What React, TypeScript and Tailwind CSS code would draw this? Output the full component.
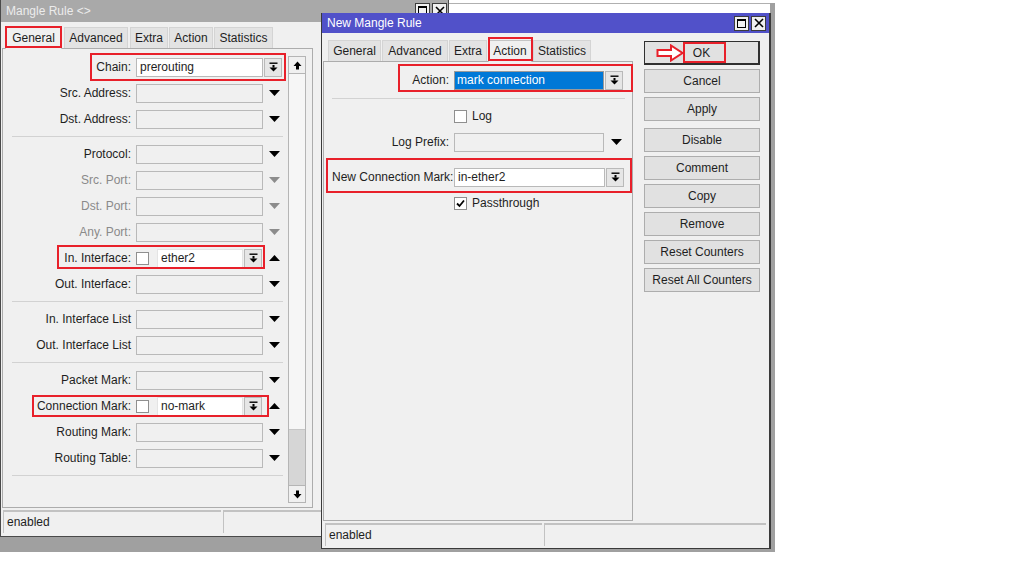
import React from "react";

const BarDown = () => (
  <svg width="9" height="10" viewBox="0 0 9 10">
    <rect x="0.5" y="0.5" width="8" height="1.4" fill="#000" />
    <rect x="3.5" y="3" width="2" height="2.6" fill="#000" />
    <path d="M0.5 5.5 H8.5 L4.5 9.5 Z" fill="#000" />
  </svg>
);

const TriDown = ({ gray }: { gray?: boolean }) => (
  <svg width="11" height="6" viewBox="0 0 11 6">
    <path d="M0 0 H11 L5.5 6 Z" fill={gray ? "#8c8c8c" : "#000"} />
  </svg>
);

const TriUp = () => (
  <svg width="11" height="6" viewBox="0 0 11 6">
    <path d="M0 6 H11 L5.5 0 Z" fill="#000" />
  </svg>
);

const ScrollUp = () => (
  <svg width="9" height="9" viewBox="0 0 9 9">
    <path d="M4.5 0.5 L8.5 5 H6 V8.5 H3 V5 H0.5 Z" fill="#000" />
  </svg>
);

const ScrollDown = () => (
  <svg width="9" height="9" viewBox="0 0 9 9">
    <path d="M4.5 8.5 L8.5 4 H6 V0.5 H3 V4 H0.5 Z" fill="#000" />
  </svg>
);

const Check = () => (
  <svg width="11" height="11" viewBox="0 0 11 11">
    <path d="M2 5.5 L4.5 8 L9 2.5" stroke="#000" strokeWidth="1.8" fill="none" />
  </svg>
);

const WinButtons = () => (
  <div className="flex gap-[2px]">
    <div className="w-[15px] h-[15px] bg-[#f0f0f0] border border-[#3c3c3c] flex items-center justify-center">
      <div className="w-[9px] h-[9px] border border-[#000] border-t-2" />
    </div>
    <div className="w-[15px] h-[15px] bg-[#f0f0f0] border border-[#3c3c3c] flex items-center justify-center">
      <svg width="10" height="10" viewBox="0 0 10 10">
        <path d="M1 1 L9 9 M9 1 L1 9" stroke="#000" strokeWidth="1.6" />
      </svg>
    </div>
  </div>
);

const DropBtn = () => (
  <div className="w-[18px] h-[19px] bg-[#e6e6e6] border border-[#b9b9b9] flex items-center justify-center shrink-0">
    <BarDown />
  </div>
);

const CheckBox = ({ checked }: { checked?: boolean }) => (
  <div className="w-[13px] h-[13px] bg-white border border-[#8f8f8f] flex items-center justify-center shrink-0">
    {checked ? <Check /> : null}
  </div>
);

type Kind = "select" | "gray" | "chain" | "check";
type RowDef = { label: string; kind: Kind; value?: string };

const LRow = ({ r }: { r: RowDef }) => (
  <div className="h-[26px] flex items-center">
    <div
      className={
        "w-[119px] shrink-0 text-right whitespace-nowrap " +
        (r.kind === "gray" ? "text-[#8a8a8a]" : "text-[#1e1e1e]")
      }
    >
      {r.label}
    </div>
    <div className="ml-[5px] flex items-center shrink-0">
      {r.kind === "chain" ? (
        <>
          <div className="w-[127px] h-[19px] bg-white border border-[#b9b9b9] pl-[3px] leading-[17px] text-[#1e1e1e]">
            {r.value}
          </div>
          <div className="ml-[1px]">
            <DropBtn />
          </div>
        </>
      ) : r.kind === "check" ? (
        <>
          <CheckBox />
          <div className="ml-[8px] w-[86px] h-[19px] bg-white border border-[#e4e4e4] pl-[3px] leading-[17px] text-[#1e1e1e]">
            {r.value}
          </div>
          <div className="ml-[1px]">
            <DropBtn />
          </div>
          <div className="w-[24px] flex justify-center">
            <TriUp />
          </div>
        </>
      ) : (
        <>
          <div className="w-[127px] h-[19px] bg-[#f0f0f0] border border-[#b9b9b9]" />
          <div className="w-[22px] flex justify-center">
            <TriDown gray={r.kind === "gray"} />
          </div>
        </>
      )}
    </div>
  </div>
);

const leftGroups: RowDef[][] = [
  [
    { label: "Chain:", kind: "chain", value: "prerouting" },
    { label: "Src. Address:", kind: "select" },
    { label: "Dst. Address:", kind: "select" },
  ],
  [
    { label: "Protocol:", kind: "select" },
    { label: "Src. Port:", kind: "gray" },
    { label: "Dst. Port:", kind: "gray" },
    { label: "Any. Port:", kind: "gray" },
    { label: "In. Interface:", kind: "check", value: "ether2" },
    { label: "Out. Interface:", kind: "select" },
  ],
  [
    { label: "In. Interface List", kind: "select" },
    { label: "Out. Interface List", kind: "select" },
  ],
  [
    { label: "Packet Mark:", kind: "select" },
    { label: "Connection Mark:", kind: "check", value: "no-mark" },
    { label: "Routing Mark:", kind: "select" },
    { label: "Routing Table:", kind: "select" },
  ],
];

const Tab = ({ label, w, ml, sel }: { label: string; w: string; ml: string; sel?: boolean }) => (
  <div
    className={
      w +
      " " +
      ml +
      " shrink-0 text-center text-[#1e1e1e] border border-b-0 " +
      (sel
        ? "h-[22px] leading-[21px] bg-[#f0f0f0] border-[#c4c4c4] relative z-10 -mb-[1px]"
        : "h-[21px] leading-[21px] bg-[#e3e3e3] border-[#d4d4d4]")
    }
  >
    {label}
  </div>
);

const StatusBar = ({ w1, w2 }: { w1: string; w2: string }) => (
  <div className="mt-[2px] h-[23px] flex shrink-0">
    <div className={w1 + " h-full border-t-2 border-l border-[#c2c2c2] pl-[3px] leading-[21px] text-[#1e1e1e]"}>
      enabled
    </div>
    <div className={w2 + " ml-[2px] h-full border-t-2 border-l border-[#c2c2c2]"} />
  </div>
);

const LeftWindow = () => (
  <div className="absolute left-0 top-0 w-[449px] h-[537px] flex flex-col border-l border-r border-b border-[#4a4a4a] bg-[#f0f0f0]">
    <div className="h-[22px] bg-[#a9a9a9] flex items-start justify-between pl-[5px] pr-[1px] shrink-0">
      <span className="text-[#ececec] leading-[22px]">Mangle Rule &lt;&gt;</span>
      <div className="mt-[3px]">
        <WinButtons />
      </div>
    </div>
    <div className="pl-[1px] flex flex-col">
      <div className="mt-[5px] h-[21px] flex items-end">
        <Tab label="General" w="w-[57px]" ml="ml-[3px]" sel />
        <Tab label="Advanced" w="w-[64px]" ml="ml-[2px]" />
        <Tab label="Extra" w="w-[38px]" ml="ml-[2px]" />
        <Tab label="Action" w="w-[44px]" ml="ml-[1px]" />
        <Tab label="Statistics" w="w-[59px]" ml="ml-[1px]" />
      </div>
      <div className="h-[460px] w-[311px] border border-[#acacac] bg-[#f0f0f0] flex">
        <div className="w-[285px] shrink-0 pl-[9px] pt-[5px] flex flex-col">
          {leftGroups.map((g, gi) => (
            <div key={gi} className="w-[271px] border-b border-[#d2d2d2] pb-[4px] mb-[4px]">
              {g.map((r) => (
                <LRow key={r.label} r={r} />
              ))}
            </div>
          ))}
        </div>
        <div className="mt-[7px] w-[18px] shrink-0 h-[447px] border border-[#b5b5b5] flex flex-col">
          <div className="h-[17px] border-b border-[#b5b5b5] bg-[#f0f0f0] flex items-center justify-center">
            <ScrollUp />
          </div>
          <div className="flex-1 bg-[#f6f6f6] flex flex-col justify-end">
            <div className="h-[56px] bg-[#d6d6d6] border-t border-[#c6c6c6]" />
          </div>
          <div className="h-[17px] border-t border-[#b5b5b5] bg-[#f0f0f0] flex items-center justify-center">
            <ScrollDown />
          </div>
        </div>
      </div>
      <div className="pl-[1px]">
        <StatusBar w1="w-[218px]" w2="w-[224px]" />
      </div>
    </div>
  </div>
);

const RRow = ({ label, children }: { label: string; children: React.ReactNode }) => (
  <div className="h-[26px] flex items-center">
    <div className="w-[117px] shrink-0 text-right whitespace-nowrap text-[#1e1e1e]">{label}</div>
    <div className="ml-[5px] flex items-center shrink-0">{children}</div>
  </div>
);

const Btn = ({ label, def, mt }: { label: string; def?: boolean; mt: string }) => (
  <div
    className={
      mt +
      " h-[24px] w-[116px] flex items-center justify-center text-[#1e1e1e] bg-[#e1e1e1] " +
      (def ? "border border-[#303030] border-r-2 border-b-2" : "border border-[#adadad]")
    }
  >
    {label}
  </div>
);

const RightWindow = () => (
  <div className="absolute left-[321px] top-[13px] w-[450px] h-[536px] flex flex-col border-l border-r-2 border-b border-[#3a3a3a] bg-[#f0f0f0]">
    <div className="h-[20px] bg-[#5151c9] flex items-center justify-between pl-[5px] pr-[3px] shrink-0">
      <span className="text-white leading-[20px]">New Mangle Rule</span>
      <WinButtons />
    </div>
    <div className="flex">
      <div className="ml-[1px] w-[310px] shrink-0 flex flex-col">
        <div className="mt-[7px] h-[21px] flex items-end">
          <Tab label="General" w="w-[53px]" ml="ml-[5px]" />
          <Tab label="Advanced" w="w-[66px]" ml="ml-[1px]" />
          <Tab label="Extra" w="w-[38px]" ml="ml-[1px]" />
          <Tab label="Action" w="w-[44px]" ml="ml-[1px]" sel />
          <Tab label="Statistics" w="w-[58px]" ml="ml-[1px]" />
        </div>
        <div className="h-[460px] w-[310px] border border-[#acacac] bg-[#f0f0f0] flex flex-col pl-[8px] pt-[5px]">
          <div className="w-[293px] border-b border-[#d2d2d2] pb-[5px] mb-[4px]">
            <RRow label="Action:">
              <div className="w-[150px] h-[19px] bg-[#0078d7] border border-[#9a9a9a] pl-[2px] leading-[17px] text-white">
                mark connection
              </div>
              <div className="ml-[1px]">
                <DropBtn />
              </div>
            </RRow>
          </div>
          <RRow label="">
            <CheckBox />
            <span className="ml-[5px] text-[#1e1e1e]">Log</span>
          </RRow>
          <RRow label="Log Prefix:">
            <div className="w-[150px] h-[19px] bg-[#f0f0f0] border border-[#b9b9b9]" />
            <div className="w-[24px] flex justify-center">
              <TriDown />
            </div>
          </RRow>
          <div className="h-[9px]" />
          <RRow label="New Connection Mark:">
            <div className="w-[151px] h-[19px] bg-white border border-[#b9b9b9] pl-[3px] leading-[17px] text-[#1e1e1e]">
              in-ether2
            </div>
            <div className="ml-[1px]">
              <DropBtn />
            </div>
          </RRow>
          <RRow label="">
            <CheckBox checked />
            <span className="ml-[5px] text-[#1e1e1e]">Passthrough</span>
          </RRow>
        </div>
      </div>
      <div className="ml-[11px] flex flex-col">
        <Btn label="OK" def mt="mt-[8px]" />
        <Btn label="Cancel" mt="mt-[4px]" />
        <Btn label="Apply" mt="mt-[4px]" />
        <Btn label="Disable" mt="mt-[7px]" />
        <Btn label="Comment" mt="mt-[4px]" />
        <Btn label="Copy" mt="mt-[4px]" />
        <Btn label="Remove" mt="mt-[4px]" />
        <Btn label="Reset Counters" mt="mt-[4px]" />
        <Btn label="Reset All Counters" mt="mt-[4px]" />
      </div>
    </div>
    <div className="pl-[3px]">
      <StatusBar w1="w-[217px]" w2="w-[222px]" />
    </div>
  </div>
);

const RedBox = ({ cls }: { cls: string }) => (
  <div className={"absolute border-2 border-[#e8202a] pointer-events-none z-20 " + cls} />
);

export default function App() {
  return (
    <div className="relative w-[1024px] h-[576px] bg-white overflow-hidden font-['Liberation_Sans',Arial,sans-serif] text-[12px]">
      <div className="absolute left-0 top-[537px] w-[775px] h-[15px] bg-[#a0a0a0]" />
      <div className="absolute left-[449px] top-[3px] w-[326px] h-[1px] bg-[#b0b0b0]" />
      <div className="absolute left-[770px] top-[3px] w-[5px] h-[549px] bg-[#a0a0a0]" />
      <LeftWindow />
      <RightWindow />
      <RedBox cls="left-[5px] top-[26px] w-[57px] h-[22px]" />
      <RedBox cls="left-[90px] top-[53px] w-[196px] h-[28px]" />
      <RedBox cls="left-[57px] top-[245px] w-[208px] h-[24px]" />
      <RedBox cls="left-[32px] top-[395px] w-[237px] h-[22px]" />
      <RedBox cls="left-[488px] top-[37px] w-[45px] h-[24px]" />
      <RedBox cls="left-[398px] top-[64px] w-[235px] h-[28px]" />
      <RedBox cls="left-[326px] top-[158px] w-[306px] h-[35px]" />
      <RedBox cls="left-[683px] top-[42px] w-[43px] h-[21px]" />
      <svg className="absolute left-[656px] top-[44px] z-20" width="28" height="18" viewBox="0 0 28 18">
        <path d="M1.5 6 H15 V1.5 L26.5 9 L15 16.5 V12 H1.5 Z" fill="#fff" stroke="#e8202a" strokeWidth="2" />
      </svg>
    </div>
  );
}
